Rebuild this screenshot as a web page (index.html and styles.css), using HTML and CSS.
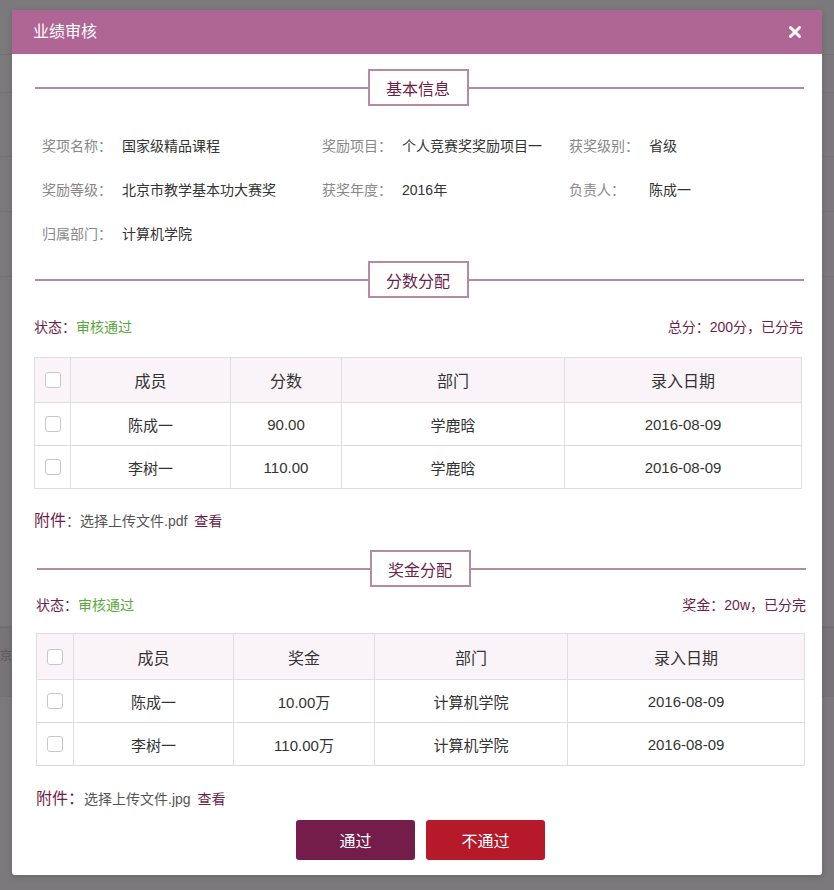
FILE: index.html
```html
<!DOCTYPE html>
<html lang="zh-CN">
<head>
<meta charset="utf-8">
<title>业绩审核</title>
<link rel="stylesheet" href="styles.css">
</head>
<body>
<div class="backdrop">
  <div class="bg-row h55"></div>
  <div class="bg-row h38"></div>
  <div class="bg-row h64"></div>
  <div class="bg-row h55"></div>
  <div class="bg-row h65"></div>
  <div class="bg-row h350"></div>
  <div class="bg-row h70 bg-dark"><span class="bg-text">京</span></div>
</div>

<div class="modal">
  <div class="modal-header">
    <span class="modal-title">业绩审核</span>
    <svg class="close" width="12" height="12" viewBox="0 0 12 12"><path d="M1.5 1.5 L10.5 10.5 M10.5 1.5 L1.5 10.5" stroke="#fff" stroke-width="3" stroke-linecap="round"/></svg>
  </div>
  <div class="modal-body">
    <div class="divider"><span class="divider-box">基本信息</span></div>
    <div class="info-grid">
      <div class="info-item"><span class="info-label">奖项名称：</span><span class="info-value">国家级精品课程</span></div>
      <div class="info-item"><span class="info-label">奖励项目：</span><span class="info-value">个人竞赛奖奖励项目一</span></div>
      <div class="info-item"><span class="info-label">获奖级别：</span><span class="info-value">省级</span></div>
      <div class="info-item"><span class="info-label">奖励等级：</span><span class="info-value">北京市教学基本功大赛奖</span></div>
      <div class="info-item"><span class="info-label">获奖年度：</span><span class="info-value">2016年</span></div>
      <div class="info-item"><span class="info-label">负责人：</span><span class="info-value">陈成一</span></div>
      <div class="info-item"><span class="info-label">归属部门：</span><span class="info-value">计算机学院</span></div>
    </div>

    <div class="divider divider-score"><span class="divider-box">分数分配</span></div>
    <div class="section">
      <div class="status-row status-score">
        <span>状态：<span class="ok">审核通过</span></span>
        <span>总分：200分，已分完</span>
      </div>
      <table class="grid-table t-score">
        <colgroup><col style="width:36px"><col style="width:160px"><col style="width:111px"><col style="width:223px"><col></colgroup>
        <thead><tr><th><span class="cb"></span></th><th>成员</th><th>分数</th><th>部门</th><th>录入日期</th></tr></thead>
        <tbody>
          <tr><td><span class="cb"></span></td><td>陈成一</td><td>90.00</td><td>学鹿晗</td><td>2016-08-09</td></tr>
          <tr><td><span class="cb"></span></td><td>李树一</td><td>110.00</td><td>学鹿晗</td><td>2016-08-09</td></tr>
        </tbody>
      </table>
      <div class="attach"><span class="attach-label">附件</span>：选择上传文件.pdf <a class="view">查看</a></div>
    </div>

    <div class="section section-shift">
      <div class="divider divider-bonus"><span class="divider-box">奖金分配</span></div>
      <div class="status-row status-bonus">
        <span>状态：<span class="ok">审核通过</span></span>
        <span>奖金：20w，已分完</span>
      </div>
      <table class="grid-table t-bonus">
        <colgroup><col style="width:37px"><col style="width:160px"><col style="width:141px"><col style="width:193px"><col></colgroup>
        <thead><tr><th><span class="cb"></span></th><th>成员</th><th>奖金</th><th>部门</th><th>录入日期</th></tr></thead>
        <tbody>
          <tr><td><span class="cb"></span></td><td>陈成一</td><td>10.00万</td><td>计算机学院</td><td>2016-08-09</td></tr>
          <tr><td><span class="cb"></span></td><td>李树一</td><td>110.00万</td><td>计算机学院</td><td>2016-08-09</td></tr>
        </tbody>
      </table>
      <div class="attach attach-2"><span class="attach-label">附件：</span>选择上传文件.jpg <a class="view">查看</a></div>
    </div>

    <div class="actions">
      <button class="btn btn-pass">通过</button>
      <button class="btn btn-reject">不通过</button>
    </div>
  </div>
</div>
</body>
</html>
```

FILE: styles.css
```css
* { box-sizing: border-box; }
html, body { margin: 0; padding: 0; }
body {
  width: 834px;
  height: 890px;
  overflow: hidden;
  background: #7b797b;
  font-family: "Liberation Sans", "Noto Sans CJK SC", sans-serif;
  color: #333;
  position: relative;
}

/* backdrop page (dimmed) */
.backdrop { display: flex; flex-direction: column; }
.bg-row { border-bottom: 1px solid #737173; }
.h55 { height: 55px; }
.h38 { height: 38px; }
.h64 { height: 64px; }
.h55 { height: 55px; }
.h65 { height: 65px; }
.h350 { height: 350px; }
.h70 { height: 70px; }
.bg-dark { background: #767476; border-top: 1px solid #706e70; }
.bg-text { display: block; margin: 20px 0 0 0; font-size: 12px; line-height: 16px; color: #5a585a; }

/* modal */
.modal {
  position: absolute;
  left: 12px;
  top: 10px;
  width: 810px;
  height: 865px;
  background: #fff;
  border-radius: 0 0 3px 3px;
  box-shadow: 0 2px 6px rgba(0,0,0,0.15);
}
.modal-header {
  height: 44px;
  background: #b06695;
  display: flex;
  align-items: center;
  justify-content: space-between;
  padding: 0 21px 0 21px;
}
.modal-title { color: #fff; font-size: 16px; line-height: 20px; }
.close { display: block; }

.modal-body { padding: 15px 18px 0 22px; }

/* divider */
.divider {
  height: 37px;
  display: flex;
  justify-content: center;
  align-items: center;
  position: relative;
}
.divider::before {
  content: "";
  position: absolute;
  left: 1px; right: 0;
  top: 18px;
  height: 2px;
  background: #b48ba3;
}
.divider-box {
  position: relative;
  width: 101px;
  height: 37px;
  border: 2px solid #b48ba3;
  background: #fff;
  color: #6d1f4a;
  font-size: 16px;
  display: flex;
  align-items: center;
  justify-content: center;
  margin-left: -2px;
}

/* info grid */
.info-grid {
  display: grid;
  grid-template-columns: 280px 247px 1fr;
  grid-auto-rows: 44px;
  padding: 17px 0 0 8px;
  font-size: 14px;
}
.info-item { display: flex; align-items: center; }
.info-label { width: 80px; color: #888; }
.info-value { color: #333; }

.divider-score { margin-top: 6px; }

/* status row */
.status-row {
  display: flex;
  justify-content: space-between;
  font-size: 14px;
  line-height: 20px;
  color: #6d1f4a;
}
.status-score { margin-top: 19px; margin-right: 1px; }
.status-bonus { margin-top: 8px; }
.ok { color: #5aa83a; }

/* tables */
.grid-table {
  width: 768px;
  border-collapse: collapse;
  table-layout: fixed;
  text-align: center;
  border: 1px solid #e0dde0;
}
.t-score { margin-top: 20px; }
.t-bonus { margin-top: 18px; width: 769px; }
.grid-table th, .grid-table td {
  border: 1px solid #e0dde0;
  padding: 0;
  color: #333;
}
.grid-table th {
  height: 45px;
  background: #faf3f8;
  font-weight: normal;
  font-size: 16px;
}
.t-bonus th { height: 46px; }
.grid-table td { height: 43px; font-size: 15px; }
.cb {
  display: block;
  width: 16px;
  height: 16px;
  margin: 0 auto;
  border: 1px solid #c8c8c8;
  border-radius: 3px;
  background: #fff;
}

/* attachment */
.attach {
  margin-top: 22px;
  font-size: 14px;
  line-height: 20px;
  color: #555;
}
.attach-2 { margin-top: 23px; }
.attach-label { color: #6d1f4a; font-size: 16px; }
.view { color: #6d1f4a; margin-left: 3px; }

.section-shift { margin-left: 2px; margin-right: -2px; }
.divider-bonus { margin-top: 19px; }

/* buttons */
.actions {
  display: flex;
  justify-content: center;
  gap: 11px;
  margin-top: 11px;
  padding-left: 3px;
}
.btn {
  width: 119px;
  height: 40px;
  border: none;
  border-radius: 3px;
  color: #fff;
  font-family: "Liberation Sans", "Noto Sans CJK SC", sans-serif;
  font-size: 16px;
}
.btn-pass { background: #741c4a; }
.btn-reject { background: #b5192a; }
```
